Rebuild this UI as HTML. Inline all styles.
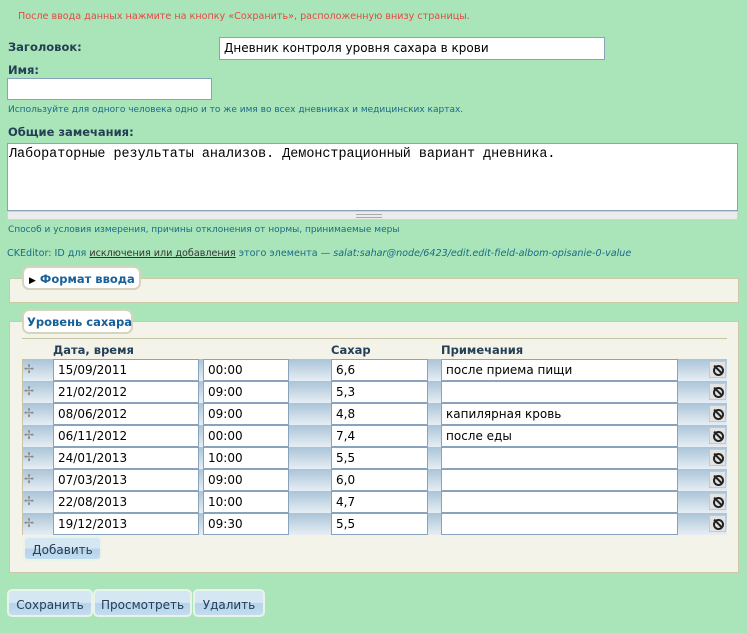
<!DOCTYPE html>
<html><head><meta charset="utf-8"><style>
*{box-sizing:border-box}
body{margin:0;width:747px;height:633px;background:#a9e5b8;font-family:"DejaVu Sans","Liberation Sans",sans-serif;position:relative;overflow:hidden;color:#22425a}
.a{position:absolute;white-space:nowrap}
.lab{font-weight:bold;font-size:11.5px;color:#233f55}
.hint{font-size:9px;color:#1a6a88}
.inp{position:absolute;background:#fff;border:1px solid #8aa3bd;font-size:12px;color:#000;padding:3px 0 0 4px;white-space:nowrap;overflow:hidden}
.fs{position:absolute;background:#f4f3e9;border:1px solid #cbc9a6}
.lg{position:absolute;background:#fff;border:2px solid #d6d4bc;border-radius:7px;font-weight:bold;font-size:11.5px;color:#17609a;padding:4px 5px;white-space:nowrap}
.grad{position:absolute;background:linear-gradient(#a9c4d8,#e7eef4)}
.btn{position:absolute;border:2px solid #e9f3e9;border-radius:5px;background:linear-gradient(#d6e7f4 0%,#d6e7f4 48%,#b5d3ea 52%,#c3dcef 100%);font-size:12px;color:#253d55;text-align:center;padding-top:5px}
.del{position:absolute;width:17px;height:17px;background:#e3e3e3;border:1px solid #c8c8c8}
.del:after{content:"";position:absolute;left:3px;top:3px;width:7px;height:7px;border:2px solid #222;border-radius:50%}
.del:before{content:"";position:absolute;left:7px;top:2px;width:2px;height:11px;background:#222;transform:rotate(-45deg);z-index:1}
.drag{position:absolute;color:#888;font-size:12px}
</style></head><body>
<div class="a" style="left:18px;top:11px;font-size:9.6px;color:#e24a44">После ввода данных нажмите на кнопку «Сохранить», расположенную внизу страницы.</div>
<div class="a lab" style="left:8px;top:40px">Заголовок:</div>
<div class="inp" style="left:219px;top:37px;width:386px;height:23px">Дневник контроля уровня сахара в крови</div>
<div class="a lab" style="left:8px;top:63px">Имя:</div>
<div class="inp" style="left:7px;top:78px;width:205px;height:22px"></div>
<div class="a hint" style="left:8px;top:105px">Используйте для одного человека одно и то же имя во всех дневниках и медицинских картах.</div>
<div class="a lab" style="left:8px;top:125px">Общие замечания:</div>
<div class="inp" style="left:7px;top:143px;width:731px;height:68px;font-family:'Liberation Mono',monospace;font-size:13.4px;padding:3px 0 0 1px">Лабораторные результаты анализов. Демонстрационный вариант дневника.</div>
<div class="a" style="left:7px;top:211px;width:731px;height:9px;background:#ececec;border:1px solid #d2d2d2"><div style="position:absolute;left:348px;top:2px;width:26px;height:4px;border-top:1px solid #aaa;border-bottom:1px solid #aaa"></div></div>
<div class="a hint" style="left:8px;top:225px">Способ и условия измерения, причины отклонения от нормы, принимаемые меры</div>
<div class="a" style="left:7px;top:248px;font-size:9.6px;color:#1a6a88">CKEditor: ID для <span style="text-decoration:underline;color:#333">исключения или добавления</span> этого элемента — <i>salat:sahar@node/6423/edit.edit-field-albom-opisanie-0-value</i></div>
<div class="fs" style="left:9px;top:278px;width:730px;height:25px"></div>
<div class="lg" style="left:22px;top:266px;width:119px;height:24px"><span style="font-size:9px;color:#000">&#9654;</span> Формат ввода</div>
<div class="fs" style="left:9px;top:321px;width:730px;height:252px"></div>
<div class="lg" style="left:22px;top:309px;width:111px;height:25px;padding-left:3px">Уровень сахара</div>
<div class="a" style="left:22px;top:338px;width:705px;height:1px;background:#c6c4a4"></div>
<div class="a lab" style="left:53px;top:343px">Дата, время</div>
<div class="a lab" style="left:331px;top:343px">Сахар</div>
<div class="a lab" style="left:441px;top:343px">Примечания</div>
<div style="position:absolute;left:22px;top:359px;width:705px;height:176px;border-left:1px solid #c6c4a4"></div>
<div id="rows"></div>
<script>
var d=[["15/09/2011","00:00","6,6","после приема пищи"],["21/02/2012","09:00","5,3",""],["08/06/2012","09:00","4,8","капилярная кровь"],["06/11/2012","00:00","7,4","после еды"],["24/01/2013","10:00","5,5",""],["07/03/2013","09:00","6,0",""],["22/08/2013","10:00","4,7",""],["19/12/2013","09:30","5,5",""]];
var h="";
d.forEach(function(r,i){var y=359+i*22;
h+='<div class="grad" style="left:23px;top:'+y+'px;width:704px;height:22px"></div>';
h+='<div class="drag" style="left:24px;top:'+(y+3)+'px">✢</div>';
h+='<div class="inp" style="left:53px;top:'+y+'px;width:146px;height:22px">'+r[0]+'</div>';
h+='<div class="inp" style="left:203px;top:'+y+'px;width:86px;height:22px">'+r[1]+'</div>';
h+='<div class="inp" style="left:331px;top:'+y+'px;width:97px;height:22px">'+r[2]+'</div>';
h+='<div class="inp" style="left:441px;top:'+y+'px;width:237px;height:22px">'+r[3]+'</div>';
h+='<div class="del" style="left:709px;top:'+(y+2)+'px"></div>';});
document.getElementById("rows").innerHTML=h;
</script>
<div class="btn" style="left:23px;top:536px;width:79px;height:25px">Добавить</div>
<div class="btn" style="left:7px;top:589px;width:86px;height:28px;padding-top:7px">Сохранить</div>
<div class="btn" style="left:93px;top:589px;width:99px;height:28px;padding-top:7px">Просмотреть</div>
<div class="btn" style="left:193px;top:589px;width:72px;height:28px;padding-top:7px">Удалить</div>
</body></html>
